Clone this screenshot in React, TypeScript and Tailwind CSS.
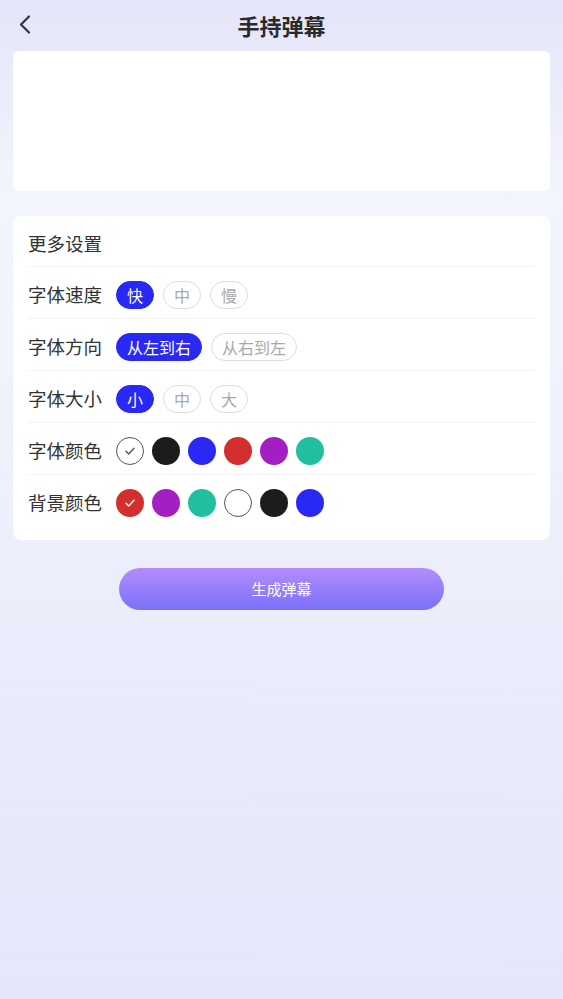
import { useState } from "react";

const fontColors = ["#ffffff", "#1c1c1c", "#2a28f5", "#d32f2f", "#a41fc2", "#1fbf9f"];
const bgColors = ["#d32f2f", "#a41fc2", "#1fbf9f", "#ffffff", "#1c1c1c", "#2a28f5"];

function Pills({
  options,
  value,
  onChange,
}: {
  options: string[];
  value: number;
  onChange: (i: number) => void;
}) {
  return (
    <div className="flex items-center gap-[9px]">
      {options.map((o, i) => (
        <button
          key={o}
          onClick={() => onChange(i)}
          className={
            i === value
              ? "h-[28px] rounded-full border border-[#2a28f5] bg-[#2a28f5] px-[10px] text-[16px] leading-none text-white"
              : "h-[28px] rounded-full border border-[#dedede] bg-white px-[10px] text-[16px] leading-none text-[#a8a8a8]"
          }
        >
          {o}
        </button>
      ))}
    </div>
  );
}

function Swatches({
  colors,
  value,
  onChange,
}: {
  colors: string[];
  value: number;
  onChange: (i: number) => void;
}) {
  return (
    <div className="flex items-center gap-[8px]">
      {colors.map((c, i) => {
        const white = c === "#ffffff";
        return (
          <button
            key={i}
            onClick={() => onChange(i)}
            className={
              white
                ? "flex h-[28px] w-[28px] items-center justify-center rounded-full border border-[#555]"
                : "flex h-[28px] w-[28px] items-center justify-center rounded-full"
            }
            style={{ backgroundColor: c }}
          >
            {i === value && (
              <svg width="12" height="12" viewBox="0 0 12 12" fill="none">
                <path
                  d="M2 6.3 4.8 9 10 3.2"
                  stroke={white ? "#555" : "#fff"}
                  strokeWidth="1.4"
                  strokeLinecap="round"
                  strokeLinejoin="round"
                />
              </svg>
            )}
          </button>
        );
      })}
    </div>
  );
}

function Row({ label, children, last }: { label: string; children: React.ReactNode; last?: boolean }) {
  return (
    <div
      className={
        last
          ? "flex h-[52px] items-center pt-[4px]"
          : "flex h-[52px] items-center border-b border-[#f3f3f6] pt-[4px]"
      }
    >
      <span className="mr-[14px] text-[18.5px] text-[#333]">{label}</span>
      {children}
    </div>
  );
}

export default function App() {
  const [speed, setSpeed] = useState(0);
  const [dir, setDir] = useState(0);
  const [size, setSize] = useState(0);
  const [fc, setFc] = useState(0);
  const [bc, setBc] = useState(0);

  return (
    <div
      className="flex min-h-screen flex-col bg-linear-to-b from-[#e5e5f9] via-[#f3f5fd] via-20% to-[#e4e6fa]"
      style={{ fontFamily: '"Noto Sans CJK SC", "Noto Sans", sans-serif' }}
    >
      <header className="relative flex h-[51px] items-center justify-center">
        <button className="absolute left-[14px] top-[13px] text-[#333]">
          <svg width="22" height="24" viewBox="0 0 22 24" fill="none">
            <path d="M15 3.5 7 11.5l8 8" stroke="currentColor" strokeWidth="2.2" strokeLinecap="round" strokeLinejoin="round" />
          </svg>
        </button>
        <h1 className="text-[22px] font-bold text-[#2a2a2a]">手持弹幕</h1>
      </header>

      <div className="mx-[13px] h-[140px] rounded-[6px] bg-white" />

      <div className="mx-[13px] mt-[25px] rounded-[8px] bg-white px-[15px] pb-[13px]">
        <div className="flex h-[51px] items-center border-b border-[#f3f3f6] pt-[5px] text-[18.5px] text-[#333]">
          更多设置
        </div>
        <Row label="字体速度">
          <Pills options={["快", "中", "慢"]} value={speed} onChange={setSpeed} />
        </Row>
        <Row label="字体方向">
          <Pills options={["从左到右", "从右到左"]} value={dir} onChange={setDir} />
        </Row>
        <Row label="字体大小">
          <Pills options={["小", "中", "大"]} value={size} onChange={setSize} />
        </Row>
        <Row label="字体颜色">
          <Swatches colors={fontColors} value={fc} onChange={setFc} />
        </Row>
        <Row label="背景颜色" last>
          <Swatches colors={bgColors} value={bc} onChange={setBc} />
        </Row>
      </div>

      <div className="mt-[28px] flex justify-center">
        <button className="h-[42px] w-[325px] rounded-full bg-linear-to-b from-[#b48cfb] to-[#7a70f8] text-[15px] text-white">
          生成弹幕
        </button>
      </div>
    </div>
  );
}
